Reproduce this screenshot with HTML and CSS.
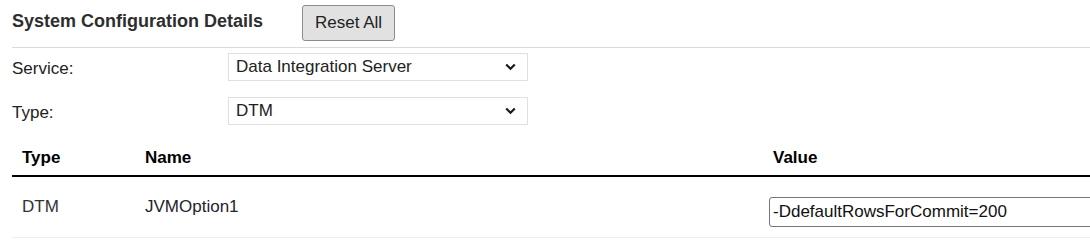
FILE: index.html
```html
<!DOCTYPE html>
<html lang="en">
<head>
<meta charset="utf-8">
<title>System Configuration Details</title>
<link rel="stylesheet" href="styles.css">
</head>
<body>
<div class="page">
  <div class="header">
    <h1 class="title">System Configuration Details</h1>
    <button class="btn" type="button">Reset All</button>
  </div>
  <div class="form">
    <div class="form-row">
      <label class="label">Service:</label>
      <div class="select">
        <span class="select-text">Data Integration Server</span>
        <svg class="chev" width="11" height="8" viewBox="0 0 11 8"><path d="M1.2 1.5 L5.5 5.8 L9.8 1.5" fill="none" stroke="#1a1a1a" stroke-width="2.2"/></svg>
      </div>
    </div>
    <div class="form-row">
      <label class="label">Type:</label>
      <div class="select">
        <span class="select-text">DTM</span>
        <svg class="chev" width="11" height="8" viewBox="0 0 11 8"><path d="M1.2 1.5 L5.5 5.8 L9.8 1.5" fill="none" stroke="#1a1a1a" stroke-width="2.2"/></svg>
      </div>
    </div>
  </div>
  <table class="grid">
    <thead>
      <tr>
        <th class="c-type">Type</th>
        <th class="c-name">Name</th>
        <th class="c-value">Value</th>
      </tr>
    </thead>
    <tbody>
      <tr>
        <td class="c-type">DTM</td>
        <td class="c-name">JVMOption1</td>
        <td class="c-value cell-input"><input class="value-input" type="text" value="-DdefaultRowsForCommit=200"></td>
      </tr>
    </tbody>
  </table>
</div>
</body>
</html>
```
FILE: styles.css
```css
html, body {
  margin: 0;
  padding: 0;
  overflow: hidden;
  background: #fff;
}
body {
  font-family: "Liberation Sans", Arial, sans-serif;
  font-size: 17px;
  color: #222;
}
.page {
  padding-left: 12px;
  width: 1078px;
}
.header {
  display: flex;
  align-items: flex-start;
  height: 47px;
  border-bottom: 1px solid #d9d9d9;
}
.title {
  margin: 0;
  margin-top: 11px;
  font-size: 18px;
  line-height: 20px;
  font-weight: bold;
  color: #2e2e2e;
  width: 290px;
  white-space: nowrap;
}
.btn {
  margin-top: 5px;
  width: 93px;
  height: 36px;
  background: #e1e1e1;
  border: 1px solid #8c8c8c;
  border-radius: 3px;
  font-family: inherit;
  font-size: 17px;
  color: #222;
  padding: 0;
}
.form {
  display: flex;
  flex-direction: column;
  gap: 16px;
  padding-top: 5px;
}
.form-row {
  display: flex;
  align-items: center;
  height: 28px;
}
.label {
  width: 216px;
  color: #222;
  padding-top: 3px;
}
.select {
  box-sizing: border-box;
  width: 300px;
  height: 28px;
  border: 1px solid #e0e0e0;
  display: flex;
  align-items: center;
  justify-content: space-between;
  padding: 0 8px 0 7px;
  color: #222;
}
.chev {
  display: block;
  margin-right: 3px;
}
.grid {
  margin-top: 13px;
  width: 1078px;
  border-collapse: collapse;
  table-layout: fixed;
}
.grid th {
  text-align: left;
  font-weight: bold;
  color: #000;
  line-height: 20px;
  padding: 10px 10px 7px;
  border-bottom: 2px solid #000;
}
.grid td {
  vertical-align: top;
  line-height: 20px;
  padding: 20px 10px 10px;
  border-bottom: 1px solid #eeeeee;
  color: #333;
}
.c-type { width: 103px; }
.c-name { width: 608px; }
.grid td.c-name { color: #1f2230; }
.grid td.cell-input {
  padding: 20px 0 10px 6px;
}
.value-input {
  box-sizing: border-box;
  display: block;
  width: 340px;
  height: 30px;
  border: 1px solid #767676;
  border-radius: 3px;
  padding: 0 3px;
  font-family: inherit;
  font-size: 17px;
  color: #111;
  outline: none;
}
```
